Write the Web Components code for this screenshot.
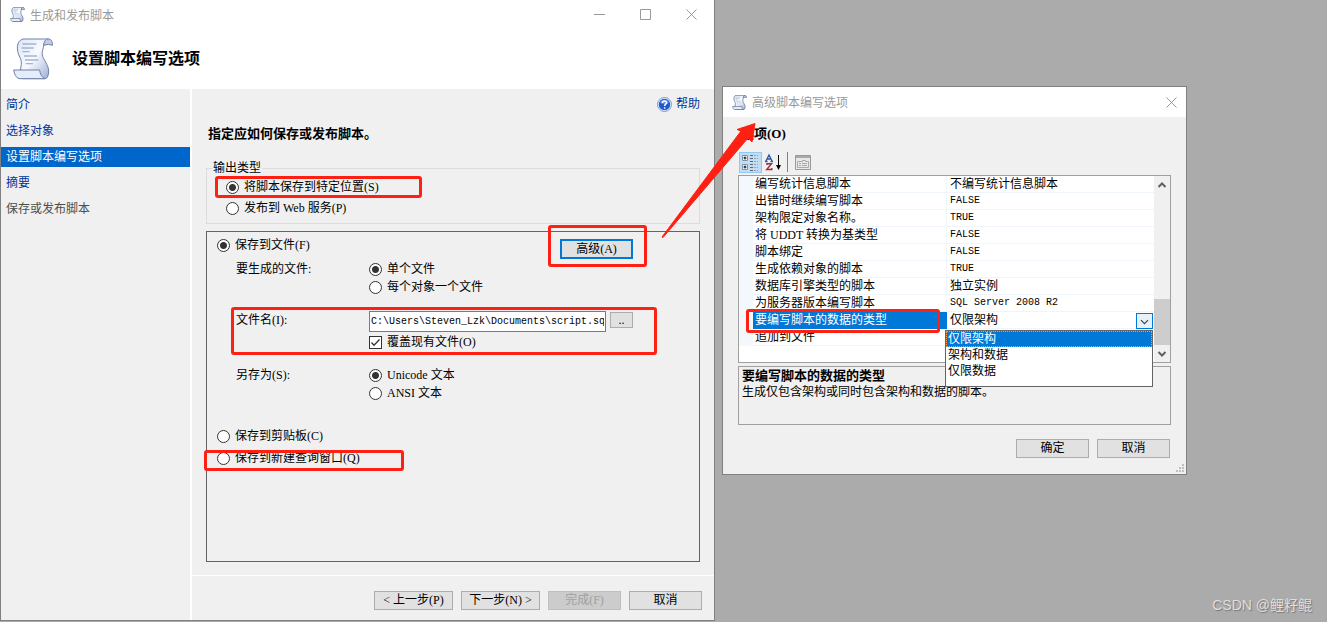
<!DOCTYPE html>
<html lang="zh-CN">
<head>
<meta charset="utf-8">
<title>生成和发布脚本</title>
<style>
	body {
		margin: 0;
		background: #ababab;
		font: 12px/18px "Liberation Serif", "Noto Sans CJK SC", serif;
		color: #000;
	}
</style>
</head>
<body>
<desk-top>
	<app-window slot="main" heading="生成和发布脚本" controls="full">
		<wizard-header>设置脚本编写选项</wizard-header>
		<wizard-body>
			<wizard-nav slot="nav"></wizard-nav>
			<script-options></script-options>
			<push-button slot="actions" wide>&lt; 上一步(P)</push-button>
			<push-button slot="actions" wide>下一步(N) &gt;</push-button>
			<push-button slot="actions" disabled>完成(F)</push-button>
			<push-button slot="actions">取消</push-button>
		</wizard-body>
	</app-window>
	<app-window slot="dialog" heading="高级脚本编写选项">
		<advanced-options></advanced-options>
	</app-window>
	<span slot="watermark">CSDN @鲤籽鲲</span>
</desk-top>

<script>
// Small base class: every element only has to supply its markup
class BaseElement extends HTMLElement {

	constructor() {
		super();
		this.attachShadow({ mode: 'open' });
	}

	connectedCallback() {
		if (this.shadowRoot.childNodes.length) return;
		this.shadowRoot.innerHTML = this.render();
		this.ready();
	}

	ready() {}

}

class ScrollIcon extends BaseElement {

	render() {
		return `
			<style>
				:host { display: block; flex: none; width: 15px; height: 15px; }
				:host([large]) { width: 40px; height: 42px; }
				svg { display: block; width: 100%; height: 100%; }
				.outline { stroke: #5f7096; stroke-width: 6; }
				:host([large]) .outline { stroke: #7080a6; stroke-width: 3; }
			</style>
			<svg viewBox="0 0 120 126" aria-hidden="true">
				<defs>
					<linearGradient id="paper" x1="0" y1="0" x2="1" y2="1">
						<stop offset="0" stop-color="#dde5f5"/>
						<stop offset="0.5" stop-color="#f8faff"/>
						<stop offset="1" stop-color="#9eafd6"/>
					</linearGradient>
				</defs>
				<g class="outline" stroke-linejoin="round">
					<path fill="url(#paper)" d="M30 3H106C98 6 93 12 92 22C90 39 83 45 92 62C101 78 110 91 106 108C105 116 102 121 96 122H28L22 96C26 79 27 69 19 54C11 39 8 9 30 3Z"/>
					<path fill="#c0cce7" d="M92 22C93 9 98 3 106 3C114 3 119 9 118 22L106 19L92 22Z"/>
					<path fill="#e6ecf9" d="M2 96H80C81 108 86 118 96 122H18C9 119 4 109 2 96Z"/>
				</g>
				<path fill="none" stroke="#a5b3d2" stroke-width="4" d="M28 18H70M26 30H62M28 41H50M33 54H72M36 66H76M38 77H60"/>
			</svg>
		`;
	}

}

class AppWindow extends BaseElement {

	render() {
		const full = this.getAttribute('controls') === 'full';
		const extra = `
			<button aria-label="最小化"><svg viewBox="0 0 11 11"><path d="M0 5.5H11"/></svg></button>
			<button aria-label="最大化"><svg viewBox="0 0 11 11"><path d="M.5 .5H10.5V10.5H.5Z"/></svg></button>
		`;
		return `
			<style>
				:host {
					display: flex;
					flex-direction: column;
					box-sizing: border-box;
					border: 1px solid #808080;
					background: #f0f0f0;
				}
				:host([controls]) { border-top: 0; }
				.bar {
					display: flex;
					align-items: center;
					gap: 5px;
					height: 30px;
					padding-left: 9px;
					background: #fff;
					color: #999;
					font-family: "Noto Sans CJK SC", sans-serif;
				}
				:host([controls]) .bar { height: 29px; }
				.bar span { flex: 1; }
				.buttons { display: flex; }
				button {
					display: grid;
					place-items: center;
					width: 46px;
					height: 28px;
					padding: 0;
					border: 0;
					background: none;
				}
				:host(:not([controls])) button { width: 30px; }
				svg { width: 11px; height: 11px; fill: none; stroke: #999; }
			</style>
			<div class="bar">
				<scroll-icon></scroll-icon>
				<span>${this.getAttribute('heading')}</span>
				<div class="buttons">
					${full ? extra : ''}
					<button aria-label="关闭"><svg viewBox="0 0 11 11"><path d="M.5 .5L10.5 10.5M10.5 .5L.5 10.5"/></svg></button>
				</div>
			</div>
			<slot></slot>
		`;
	}

}

class WizardHeader extends BaseElement {

	render() {
		return `
			<style>
				:host {
					display: flex;
					align-items: center;
					gap: 19px;
					height: 60px;
					padding-left: 12px;
					background: #fff;
				}
				h1 { margin: 0; font-size: 16px; line-height: 20px; }
			</style>
			<scroll-icon large></scroll-icon>
			<h1><slot></slot></h1>
		`;
	}

}

class WizardBody extends BaseElement {

	render() {
		return `
			<style>
				:host { display: flex; flex: 1; }
				aside { flex: none; width: 189px; border-right: 2px solid #fff; }
				main { flex: 1; display: flex; flex-direction: column; min-width: 0; }
				footer {
					display: flex;
					justify-content: flex-end;
					gap: 8px;
					padding: 15px 12px 10px;
					border-top: 1px solid #fff;
				}
			</style>
			<aside><slot name="nav"></slot></aside>
			<main>
				<slot></slot>
				<footer><slot name="actions"></slot></footer>
			</main>
		`;
	}

}

class WizardNav extends BaseElement {

	render() {
		return `
			<style>
				nav { display: flex; flex-direction: column; gap: 6px; padding-top: 6px; }
				a {
					padding-left: 5px;
					line-height: 20px;
					color: #039;
					text-decoration: none;
				}
				a[aria-current] { background: #06c; color: #fff; }
				a[aria-disabled] { color: #4d4d4d; }
			</style>
			<nav>
				<a href="#intro">简介</a>
				<a href="#objects">选择对象</a>
				<a href="#options" aria-current="step">设置脚本编写选项</a>
				<a href="#summary">摘要</a>
				<a href="#save" aria-disabled="true">保存或发布脚本</a>
			</nav>
		`;
	}

}

class PushButton extends BaseElement {

	render() {
		return `
			<style>
				:host { display: block; flex: none; width: 73px; }
				:host([wide]) { width: 79px; }
				:host([small]) { width: 23px; }
				button {
					display: block;
					width: 100%;
					height: 19px;
					padding: 0;
					border: 1px solid #adadad;
					background: #e1e1e1;
					color: #000;
					font: inherit;
					line-height: 17px;
					white-space: nowrap;
				}
				:host([small]) button { height: 16px; line-height: 12px; }
				:host([default]) button { height: 20px; border: 2px solid #0078d7; line-height: 16px; }
				button:disabled { border-color: #bfbfbf; background: #ccc; color: #a0a0a0; }
			</style>
			<button ${this.hasAttribute('disabled') ? 'disabled' : ''}><slot></slot></button>
		`;
	}

}

class ChoiceField extends BaseElement {

	render() {
		const type = this.getAttribute('type') || 'radio';
		return `
			<style>
				:host { display: block; }
				label { display: flex; align-items: center; gap: 5px; height: 18px; white-space: nowrap; }
				input {
					appearance: none;
					box-sizing: border-box;
					flex: none;
					width: 13px;
					height: 13px;
					margin: 0;
					border: 1px solid #333;
					background: #fff;
				}
				input[type=radio] { border-radius: 50%; }
				input[type=radio]:checked {
					background: radial-gradient(circle, #333 0, #333 3px, #fff 4px);
				}
				.box { display: grid; }
				.box > * { grid-area: 1 / 1; }
				svg { display: none; width: 13px; height: 13px; fill: none; stroke: #333; stroke-width: 1.3; }
				input[type=checkbox]:checked + svg { display: block; pointer-events: none; }
			</style>
			<label>
				<span class="box">
					<input type="${type}" ${this.hasAttribute('checked') ? 'checked' : ''}>
					<svg viewBox="0 0 13 13"><path d="M2.5 6.5L5 9.2L10.5 3.5"/></svg>
				</span>
				<span><slot></slot></span>
			</label>
		`;
	}

	ready() {
		const input = this.shadowRoot.querySelector('input');
		if (input.type !== 'radio') return;
		// radios in separate shadow roots do not share a group, so clear the others here
		input.addEventListener('change', () => {
			const others = this.getRootNode().querySelectorAll(`choice-field[name="${this.getAttribute('name')}"]`);
			others.forEach(el => {
				if (el !== this) el.shadowRoot.querySelector('input').checked = false;
			});
		});
	}

}

class ScriptOptions extends BaseElement {

	render() {
		return `
			<style>
				:host {
					flex: 1;
					display: flex;
					flex-direction: column;
					padding: 6px 14px 13px;
				}
				.help {
					display: flex;
					align-items: center;
					align-self: flex-end;
					gap: 4px;
					color: #039;
					text-decoration: none;
				}
				.help svg { width: 15px; height: 15px; }
				h2 { margin: 12px 2px 18px; font-size: 13px; line-height: 18px; }
				fieldset {
					min-width: 0;
					height: 63px;
					box-sizing: border-box;
					margin: 0 0 7px;
					padding: 3px 19px 0;
					border: 1px solid #dcdcdc;
				}
				legend { margin-left: -14px; padding: 0 1px; line-height: 14px; }
				fieldset choice-field + choice-field { margin-top: 3px; }
				.panel { flex: 1; padding: 4px 10px; border: 1px solid #646464; }
				.top { display: flex; justify-content: space-between; min-height: 24px; }
				.top push-button { margin: 3px 56px 0 0; }
				.fields {
					display: grid;
					grid-template-columns: 133px 1fr;
					row-gap: 15px;
					margin: 0 0 25px 19px;
				}
				.file { display: flex; gap: 4px; margin-bottom: 1px; }
				.file input {
					box-sizing: border-box;
					width: 237px;
					height: 21px;
					padding: 0 1px;
					border: 1px solid #7a7a7a;
					font: 10px "Liberation Mono", monospace;
				}
				.file push-button { margin-top: 1px; }
				.panel > choice-field + choice-field { margin-top: 4px; }
			</style>
			<a class="help" href="#help">
				<svg viewBox="0 0 15 15" aria-hidden="true">
					<circle cx="7.5" cy="7.5" r="7" fill="#e4edfc" stroke="#7f9bd0"/>
					<circle cx="7.5" cy="7.5" r="5.7" fill="#1f57cf"/>
					<path d="M3 6A4.8 4.8 0 0 1 12 6Q7.5 8 3 6Z" fill="#5f91f0"/>
					<path d="M5.4 6C5.4 3.4 9.7 3.5 9.6 5.8C9.5 7.2 7.6 7.2 7.6 9M7.6 10.2V11.7" fill="none" stroke="#fff" stroke-width="1.5"/>
				</svg>
				<span>帮助</span>
			</a>
			<h2>指定应如何保存或发布脚本。</h2>
			<fieldset>
				<legend>输出类型</legend>
				<choice-field name="output" checked>将脚本保存到特定位置(S)</choice-field>
				<choice-field name="output">发布到 Web 服务(P)</choice-field>
			</fieldset>
			<div class="panel">
				<div class="top">
					<choice-field name="target" checked>保存到文件(F)</choice-field>
					<push-button default>高级(A)</push-button>
				</div>
				<div class="fields">
					<span>要生成的文件:</span>
					<div>
						<choice-field name="files" checked>单个文件</choice-field>
						<choice-field name="files">每个对象一个文件</choice-field>
					</div>
					<label for="file">文件名(I):</label>
					<div>
						<div class="file">
							<input id="file" type="text" value="C:\\Users\\Steven_Lzk\\Documents\\script.sql">
							<push-button small>..</push-button>
						</div>
						<choice-field type="checkbox" checked>覆盖现有文件(O)</choice-field>
					</div>
					<span>另存为(S):</span>
					<div>
						<choice-field name="encoding" checked>Unicode 文本</choice-field>
						<choice-field name="encoding">ANSI 文本</choice-field>
					</div>
				</div>
				<choice-field name="target">保存到剪贴板(C)</choice-field>
				<choice-field name="target">保存到新建查询窗口(Q)</choice-field>
			</div>
		`;
	}

}

class PropertyGrid extends BaseElement {

	render() {
		const rows = [
			['编写统计信息脚本', '不编写统计信息脚本'],
			['出错时继续编写脚本', 'FALSE'],
			['架构限定对象名称。', 'TRUE'],
			['将 UDDT 转换为基类型', 'FALSE'],
			['脚本绑定', 'FALSE'],
			['生成依赖对象的脚本', 'TRUE'],
			['数据库引擎类型的脚本', '独立实例'],
			['为服务器版本编写脚本', 'SQL Server 2008 R2'],
			['要编写脚本的数据的类型', null],
			['追加到文件', '']
		];
		const choices = ['仅限架构', '架构和数据', '仅限数据'];
		const editor = `
			<select aria-label="要编写脚本的数据的类型">
				${choices.map(c => `<option>${c}</option>`).join('')}
			</select>
			<svg class="drop" viewBox="0 0 17 16"><path d="M4.5 7L8.5 11L12.5 7"/></svg>
			<ul role="listbox">
				${choices.map((c, i) => `<li role="option" aria-selected="${i === 0}">${c}</li>`).join('')}
			</ul>
		`;
		const body = rows.map(([name, value]) => `
			<tr class="${value === null ? 'active' : ''}">
				<th scope="row">${name}</th>
				<td class="${/^[A-Z]/.test(value || '') ? 'latin' : ''}">${value === null ? editor : value}</td>
			</tr>
		`).join('');
		return `
			<style>
				:host { display: flex; height: 186px; border: 1px solid #a0a0a0; background: #fff; }
				.view { flex: 1; }
				table {
					width: 100%;
					table-layout: fixed;
					border-spacing: 0;
					border-left: 14px solid #f4f7fc;
				}
				th, td {
					box-sizing: border-box;
					height: 17px;
					padding: 0 0 0 2px;
					border-bottom: 1px solid #f0f4fb;
					font-weight: normal;
					line-height: 16px;
					text-align: left;
					white-space: nowrap;
				}
				th { width: 194px; border-right: 1px solid #f0f4fb; }
				td { position: relative; padding-left: 3px; }
				.latin { font: 10px/16px "Liberation Mono", monospace; }
				.active th { background: #0078d7; color: #fff; border-color: #0078d7; }
				select {
					display: block;
					appearance: none;
					width: 100%;
					height: 16px;
					padding: 0;
					border: 0;
					background: none;
					color: inherit;
					font: inherit;
					line-height: 16px;
				}
				.drop {
					position: absolute;
					top: 1px;
					right: 1px;
					box-sizing: border-box;
					width: 17px;
					height: 16px;
					border: 1px solid #0078d7;
					background: #e5f1fb;
					fill: none;
					stroke: #444;
					stroke-width: 1.4;
					pointer-events: none;
				}
				ul {
					position: absolute;
					z-index: 1;
					top: 18px;
					left: -2px;
					right: 1px;
					margin: 0;
					padding: 0 0 7px;
					border: 1px solid #646464;
					background: #fff;
					list-style: none;
				}
				li { padding-left: 2px; line-height: 16px; }
				li[aria-selected=true] {
					background: #0078d7;
					color: #fff;
					outline: 1px dotted #ff9c4a;
					outline-offset: -1px;
				}
				.scroll {
					display: flex;
					flex-direction: column;
					width: 16px;
					background: #f0f0f0;
				}
				.scroll svg { width: 16px; height: 17px; fill: none; stroke: #606060; stroke-width: 2; }
				.thumb { height: 46px; margin: auto 0 0; background: #cdcdcd; }
			</style>
			<div class="view"><table>${body}</table></div>
			<div class="scroll" aria-hidden="true">
				<svg viewBox="0 0 16 17"><path d="M4.5 11L8 7.5L11.5 11"/></svg>
				<div class="thumb"></div>
				<svg viewBox="0 0 16 17"><path d="M4.5 7L8 10.5L11.5 7"/></svg>
			</div>
		`;
	}

}

class AdvancedOptions extends BaseElement {

	render() {
		return `
			<style>
				:host { position: relative; display: block; padding: 8px 15px 16px; }
				h2 { margin: 0 3px 8px; font-size: 13px; line-height: 18px; }
				.tools { display: flex; align-items: center; height: 22px; margin: 0 1px 2px; }
				.tools button {
					display: grid;
					place-items: center;
					box-sizing: border-box;
					width: 23px;
					height: 21px;
					padding: 0;
					border: 1px solid transparent;
					background: none;
				}
				.tools button[aria-pressed=true] { border-color: #90c8f6; background: #c2ddf3; }
				.tools svg { width: 19px; height: 19px; }
				hr { width: 1px; height: 20px; margin: 0 3px 0 2px; border: 0; background: #808080; }
				.about {
					height: 56px;
					margin: 3px 0 14px;
					padding: 1px 3px 0;
					border: 1px solid #a0a0a0;
					line-height: 16px;
				}
				.about h3 { margin: 0; font-size: 13px; line-height: 16px; }
				.about p { margin: 0; }
				.actions { display: flex; justify-content: flex-end; gap: 8px; margin-right: 1px; }
				.grip { position: absolute; right: 1px; bottom: 1px; width: 9px; height: 9px; fill: #bfbfbf; }
			</style>
			<h2>选项(O)</h2>
			<div class="tools">
				<button aria-label="按分类顺序" aria-pressed="true">
					<svg viewBox="0 0 19 19">
						<path d="M1.5 2.5H6.5V7.5H1.5ZM1.5 11.5H6.5V16.5H1.5Z" fill="#fff" stroke="#7890a8"/>
						<path d="M2.5 5H5.5M4 3.5V6.5M2.5 14H5.5M4 12.5V15.5" stroke="#000"/>
						<path d="M9 2.5H12M9 5.5H12M9 8.5H12M9 11.5H12M9 14.5H12M9 17.5H12" stroke="#666"/>
						<path d="M13 2.5H17M13 5.5H17M13 8.5H17M13 11.5H17M13 14.5H17M13 17.5H17" stroke="#8ca5c8" stroke-dasharray="2 1"/>
					</svg>
				</button>
				<button aria-label="按字母顺序">
					<svg viewBox="0 0 19 19">
						<path d="M2 8L5 2L8 8M3 6H7M1 8.5H3.5M6.5 8.5H9" fill="none" stroke="#2f55a4" stroke-width="1.3"/>
						<path d="M3 12V10.7H7.5L2.7 16.5H7.8V15" fill="none" stroke="#9c2f38" stroke-width="1.4"/>
						<path d="M14.5 2V15" stroke="#000"/>
						<path d="M12 12H17L14.5 17Z"/>
					</svg>
				</button>
				<hr>
				<button aria-label="属性页" disabled>
					<svg viewBox="0 0 19 19">
						<path d="M2.5 2.5H17.5V16.5H2.5Z" fill="#e8e8e8" stroke="#999"/>
						<path d="M3 4H17" stroke="#aaa" stroke-width="2"/>
						<path d="M4.5 8.5H9.5V7.5H12.5V8.5H15.5V14.5H4.5ZM6 10.5H8M9 10.5H14M6 12.5H8M9 12.5H14" fill="none" stroke="#aaa"/>
					</svg>
				</button>
			</div>
			<property-grid></property-grid>
			<div class="about">
				<h3>要编写脚本的数据的类型</h3>
				<p>生成仅包含架构或同时包含架构和数据的脚本。</p>
			</div>
			<div class="actions">
				<push-button>确定</push-button>
				<push-button>取消</push-button>
			</div>
			<svg class="grip" viewBox="0 0 9 9"><path d="M6 0h2v2h-2zM3 3h2v2h-2zM6 3h2v2h-2zM0 6h2v2h-2zM3 6h2v2h-2zM6 6h2v2h-2z"/></svg>
		`;
	}

}

class DeskTop extends BaseElement {

	render() {
		return `
			<style>
				:host {
					position: relative;
					display: grid;
					grid-template-columns: 715fr 7fr 465fr 140fr;
					box-sizing: border-box;
					min-height: 100vh;
					padding-bottom: 1px;
				}
				slot[name=main]::slotted(*) { grid-column: 1; }
				slot[name=dialog]::slotted(*) { grid-column: 3; align-self: start; margin-top: 86px; }
				slot[name=watermark]::slotted(*) {
					position: absolute;
					right: 15px;
					bottom: 8px;
					color: #dedede;
					font: 14px/18px "Liberation Sans", "Noto Sans CJK SC", sans-serif;
					text-shadow: 1px 1px 1px #777;
				}
				.marks {
					position: absolute;
					top: 0;
					left: 0;
					width: 100%;
					fill: none;
					stroke: #ff2014;
					stroke-width: 3;
					pointer-events: none;
				}
			</style>
			<slot name="main"></slot>
			<slot name="dialog"></slot>
			<slot name="watermark"></slot>
			<!-- red call-outs drawn over both windows -->
			<svg class="marks" viewBox="0 0 1327 622" aria-hidden="true">
				<rect x="216.5" y="177.5" width="204" height="19" rx="1.5"/>
				<rect x="549.5" y="226.5" width="96" height="39" rx="1.5"/>
				<rect x="232.5" y="308.5" width="423" height="45" rx="1.5"/>
				<rect x="205.5" y="451.5" width="197" height="18" rx="1.5"/>
				<rect x="747.5" y="310.5" width="191" height="21" rx="1.5"/>
				<path d="M662 237L741 131L737 129.500L755 123.500L752 142L748 138L663 237.500Z" fill="#ff2014" stroke-width="1"/>
			</svg>
		`;
	}

}

customElements.define('scroll-icon', ScrollIcon);
customElements.define('push-button', PushButton);
customElements.define('choice-field', ChoiceField);
customElements.define('wizard-header', WizardHeader);
customElements.define('wizard-nav', WizardNav);
customElements.define('wizard-body', WizardBody);
customElements.define('script-options', ScriptOptions);
customElements.define('property-grid', PropertyGrid);
customElements.define('advanced-options', AdvancedOptions);
customElements.define('app-window', AppWindow);
customElements.define('desk-top', DeskTop);
</script>
</body>
</html>
